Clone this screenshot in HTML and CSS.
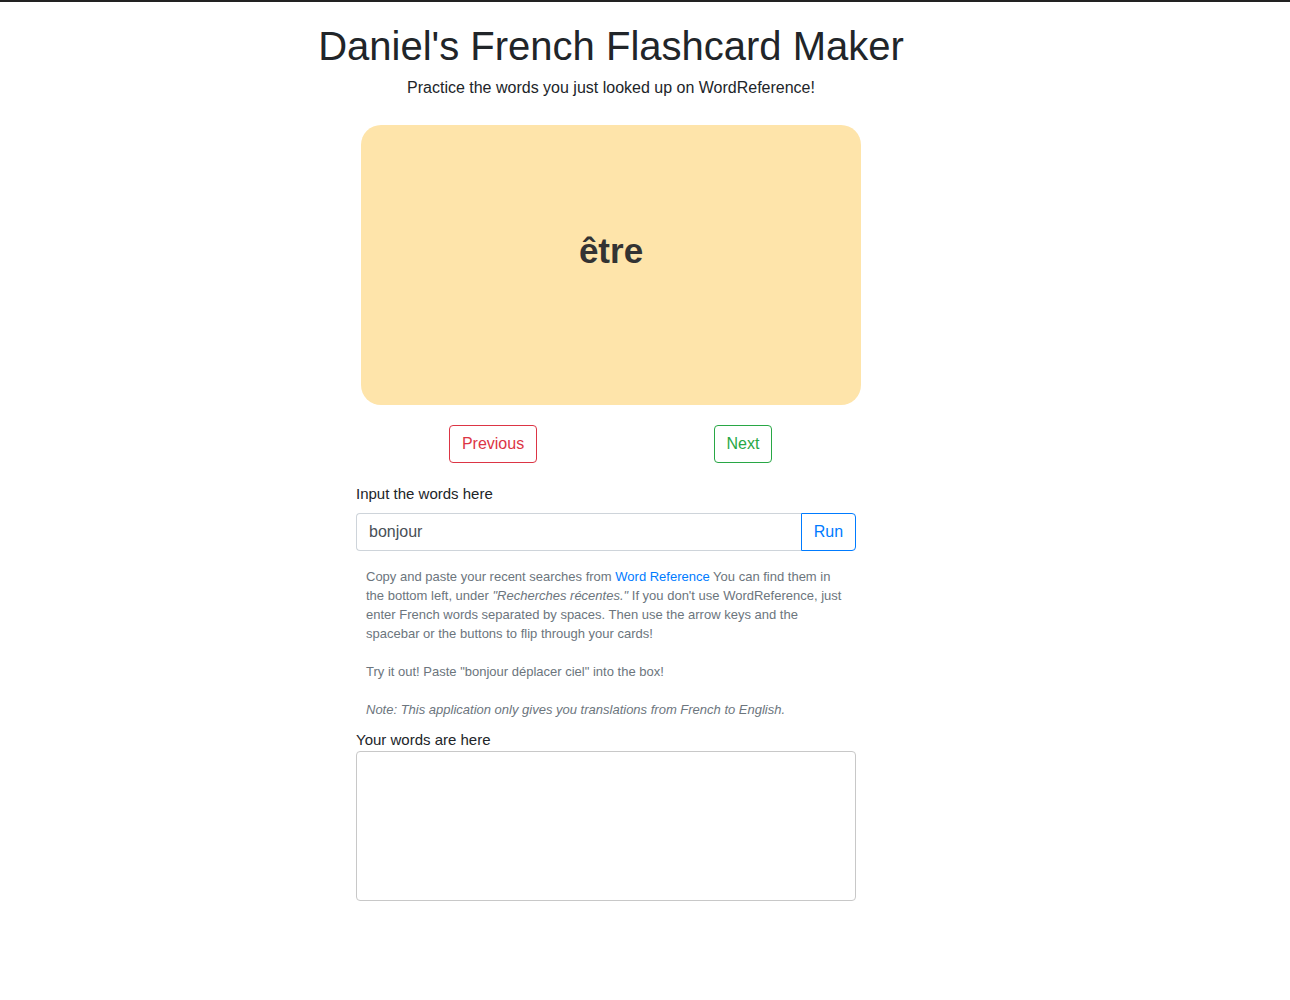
FILE: index.html
```html
<!DOCTYPE html>
<html lang="en">
<head>
<meta charset="utf-8">
<title>Daniel's French Flashcard Maker</title>
<link rel="stylesheet" href="styles.css">
</head>
<body>
<div class="page">
  <header class="header">
    <h1 class="title">Daniel's French Flashcard Maker</h1>
    <p class="subtitle">Practice the words you just looked up on WordReference!</p>
  </header>
  <div class="card-wrap">
    <div class="flashcard">être</div>
  </div>
  <div class="nav">
    <div class="nav-half"><button class="btn btn-danger">Previous</button></div>
    <div class="nav-half"><button class="btn btn-success">Next</button></div>
  </div>
  <div class="form">
    <label class="label">Input the words here</label>
    <div class="input-group">
      <input class="input" type="text" value="bonjour">
      <button class="btn btn-primary run">Run</button>
    </div>
    <div class="help">
      <p>Copy and paste your recent searches from <a href="#" class="link">Word Reference</a> You can find them in the bottom left, under <em>"Recherches récentes."</em> If you don't use WordReference, just enter French words separated by spaces. Then use the arrow keys and the spacebar or the buttons to flip through your cards!</p>
      <p>Try it out! Paste "bonjour déplacer ciel" into the box!</p>
      <p><em>Note: This application only gives you translations from French to English.</em></p>
    </div>
    <label class="label label-words">Your words are here</label>
    <textarea class="words"></textarea>
  </div>
</div>
</body>
</html>
```
FILE: styles.css
```css
html, body {
  margin: 0;
  padding: 0;
}
body {
  border-top: 2px solid #222;
  font-family: "Liberation Sans", Arial, Helvetica, sans-serif;
  color: #212529;
  background: #fff;
  font-size: 16px;
  line-height: 1.5;
}
.page {
  width: 500px;
  margin-left: 356px;
}
.header {
  width: 600px;
  margin-left: -45px;
  text-align: center;
}
.title {
  margin: 20px 0 6px;
  font-size: 40px;
  font-weight: 400;
  line-height: 48px;
}
.subtitle {
  margin: 0;
  font-size: 16px;
  line-height: 24px;
}
.card-wrap {
  padding-left: 5px;
  margin-top: 25px;
}
.flashcard {
  width: 500px;
  height: 280px;
  border-radius: 20px;
  background: #fee4aa;
  color: #333;
  font-weight: 700;
  font-size: 35px;
  display: flex;
  align-items: center;
  justify-content: center;
  padding-bottom: 28px;
  box-sizing: border-box;
}
.nav {
  display: flex;
  width: 500px;
  margin-left: 12px;
  margin-top: 20px;
}
.nav-half {
  width: 250px;
  flex-shrink: 0;
  display: flex;
  justify-content: center;
}
.btn {
  font-family: inherit;
  font-size: 16px;
  line-height: 24px;
  padding: 6px 12px;
  background: #fff;
  border: 1px solid;
  border-radius: 4px;
  cursor: pointer;
}
.btn-danger { color: #dc3545; border-color: #dc3545; }
.btn-success { color: #28a745; border-color: #28a745; }
.btn-primary { color: #007bff; border-color: #007bff; }
.form {
  margin-top: 20px;
}
.label {
  display: block;
  font-size: 15px;
  line-height: 22px;
  margin-bottom: 8px;
}
.input-group {
  display: flex;
  height: 38px;
}
.input {
  flex: 1;
  min-width: 0;
  font-family: inherit;
  font-size: 16px;
  color: #495057;
  padding: 6px 12px;
  border: 1px solid #ced4da;
  border-right: none;
  border-radius: 4px 0 0 4px;
  outline: none;
}
.run {
  border-radius: 0 4px 4px 0;
  width: 55px;
  padding: 6px 0;
}
.help {
  padding: 16px 10px 0;
  font-size: 13px;
  line-height: 19px;
  color: #6c757d;
}
.help p {
  margin: 0 0 19px;
}
.help p:last-child {
  margin-bottom: 10px;
}
.link {
  color: #007bff;
  text-decoration: none;
}
.label-words {
  margin-bottom: 0;
  font-size: 15px;
}
.words {
  display: block;
  width: 500px;
  height: 150px;
  box-sizing: border-box;
  border: 1px solid #c8c8c8;
  border-radius: 4px;
  resize: none;
  margin: 0;
}
```
